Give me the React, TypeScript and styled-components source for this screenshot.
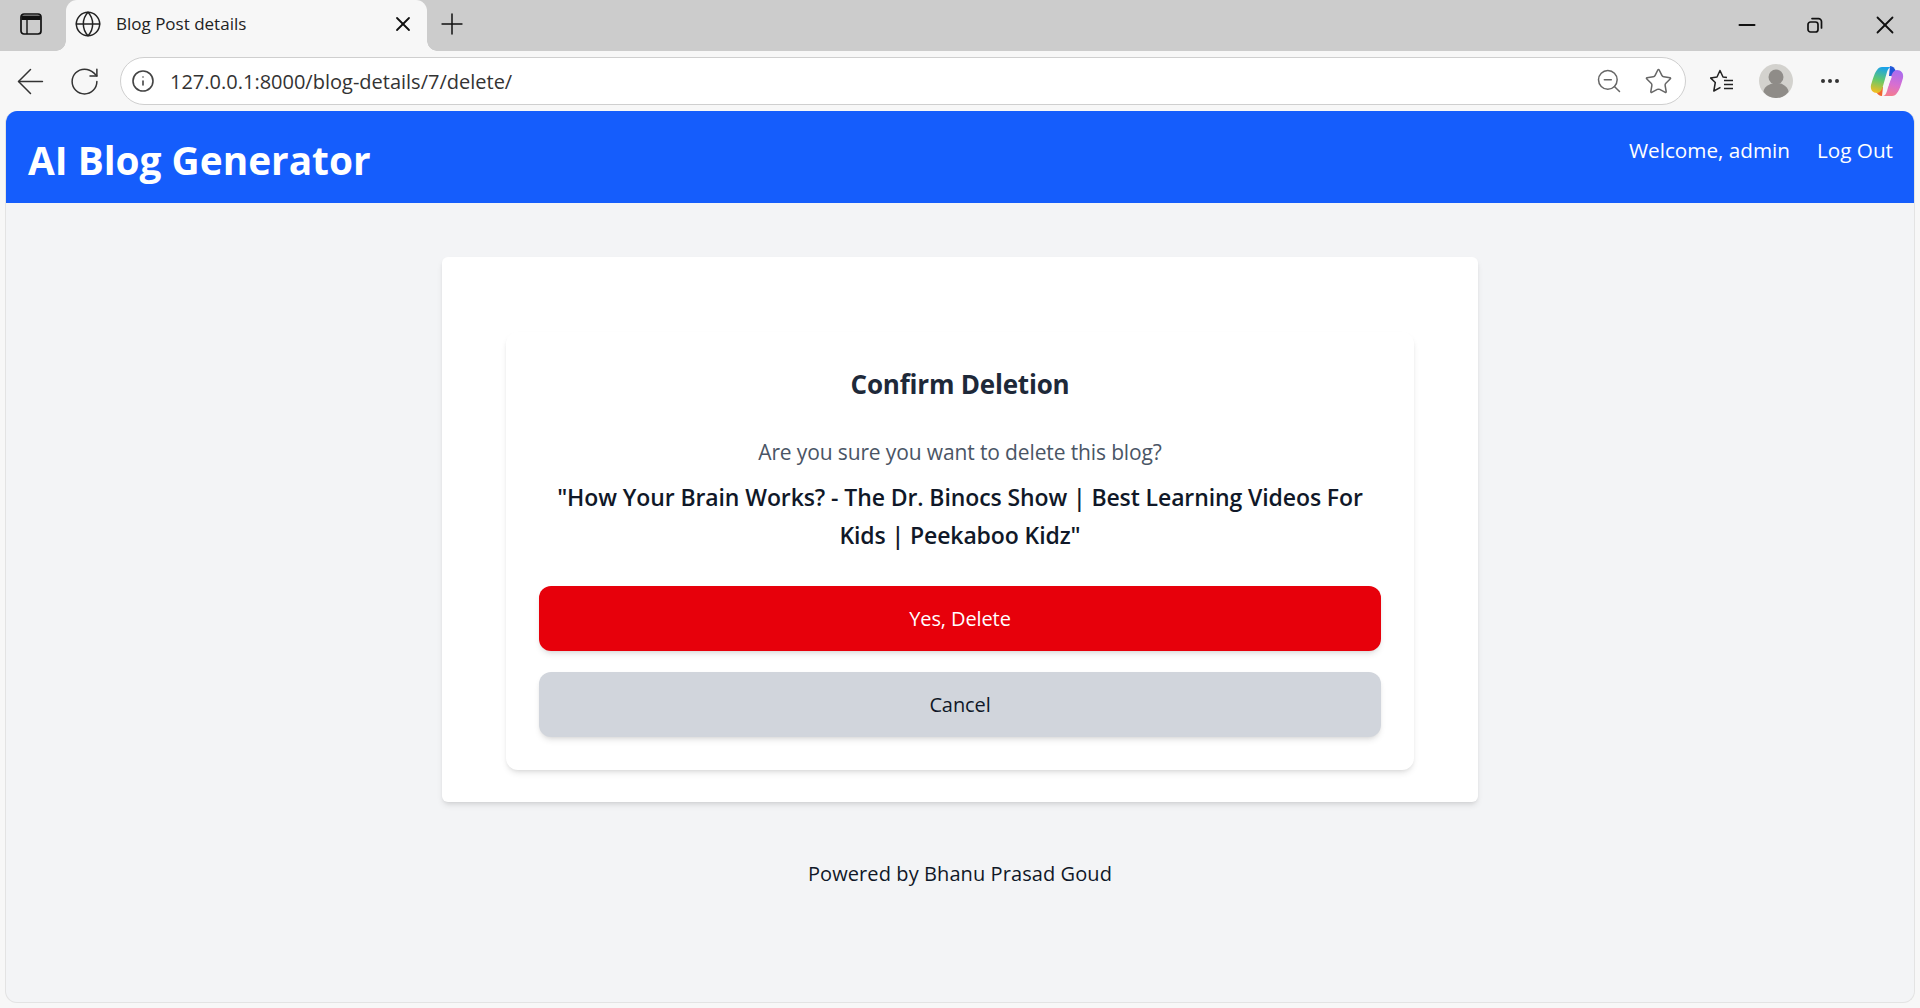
import styled, { createGlobalStyle } from "styled-components";
import { ArrowLeft, Globe, Info, Minus, Plus, RotateCw, Star, X, ZoomOut } from "lucide-react";

const GlobalStyle = createGlobalStyle`
  html, body {
    margin: 0;
    padding: 0;
    height: 100%;
    overflow: hidden;
    background: #f7f7f7;
    font-family: "Open Sans", "Noto Sans", sans-serif;
  }
  * { box-sizing: border-box; }
`;

const Shell = styled.div`
  display: flex;
  flex-direction: column;
  height: 1008px;
`;

const TabStrip = styled.div`
  align-items: flex-end;
  background: #cccccc;
  display: flex;
  flex-shrink: 0;
  height: 51px;
`;

const SideToggle = styled.div`
  align-items: center;
  align-self: center;
  display: flex;
  justify-content: center;
  padding: 0 5px 3px 0;
  width: 66px;
`;

const Tab = styled.div`
  align-items: center;
  background: #f7f7f7;
  border-radius: 11px 11px 0 0;
  display: flex;
  height: 51px;
  padding: 0 12px 4px 8px;
  position: relative;
  width: 361px;

  &::before,
  &::after {
    bottom: 0;
    content: "";
    height: 10px;
    position: absolute;
    width: 10px;
  }
  &::before {
    background: radial-gradient(circle at 0 0, transparent 9.5px, #f7f7f7 10px);
    left: -10px;
  }
  &::after {
    background: radial-gradient(circle at 100% 0, transparent 9.5px, #f7f7f7 10px);
    right: -10px;
  }
`;

const TabTitle = styled.span`
  color: #222;
  flex: 1;
  font-size: 17px;
  margin-left: 14px;
`;

const NewTab = styled.div`
  align-items: center;
  align-self: center;
  display: flex;
  margin-left: 8px;
  padding-bottom: 4px;
`;

const WindowControls = styled.div`
  align-items: center;
  align-self: center;
  display: flex;
  gap: 47px;
  margin-left: auto;
  padding: 0 20px 1px 0;
`;

const Toolbar = styled.div`
  align-items: center;
  background: #f7f7f7;
  display: flex;
  flex-shrink: 0;
  height: 60px;
  padding-left: 10px;
`;

const NavButton = styled.div<{ $gap: number }>`
  align-items: center;
  color: #333;
  display: flex;
  margin-right: ${(p) => p.$gap}px;
`;

const AddressBar = styled.div`
  align-items: center;
  background: #fff;
  border: 1px solid #cfcfcf;
  border-radius: 24px;
  display: flex;
  flex-shrink: 0;
  height: 48px;
  padding: 0 12px 0 10px;
  width: 1566px;
`;

const Url = styled.span`
  color: #333;
  flex: 1;
  font-size: 20px;
  margin-left: 15px;
`;

const BarIcons = styled.div`
  align-items: center;
  color: #666;
  display: flex;
  gap: 21px;
`;

const ToolSlot = styled.div<{ $gap: number }>`
  align-items: center;
  display: flex;
  flex-shrink: 0;
  margin-left: ${(p) => p.$gap}px;
`;

const Page = styled.div`
  background: #f3f4f6;
  border-bottom: 1px solid #e3e3e3;
  border-left: 1px solid #e3e3e3;
  border-radius: 12px;
  border-right: 1px solid #e3e3e3;
  display: flex;
  flex: 1;
  flex-direction: column;
  margin: 0 5px 5px;
  overflow: hidden;
`;

const Header = styled.header`
  align-items: flex-start;
  background: #155dfc;
  color: #fff;
  display: flex;
  flex-shrink: 0;
  height: 92px;
  justify-content: space-between;
  padding: 0 21px 0 22px;
`;

const Brand = styled.h1`
  font-size: 38.8px;
  font-weight: 700;
  line-height: 40px;
  margin: 29px 0 0;
`;

const HeaderLinks = styled.nav`
  display: flex;
  font-size: 20.7px;
  gap: 27px;
  line-height: 28px;
  margin-top: 25px;
`;

const Outer = styled.main`
  background: #fff;
  border-radius: 6px;
  box-shadow: 0 4px 6px -1px rgba(0, 0, 0, 0.1), 0 2px 4px -2px rgba(0, 0, 0, 0.1);
  margin: 54px auto 0;
  padding: 75px 64px 32px;
  width: 1036px;
`;

const Inner = styled.section`
  border-radius: 12px;
  box-shadow: 0 4px 6px -1px rgba(0, 0, 0, 0.1), 0 2px 4px -2px rgba(0, 0, 0, 0.1);
  padding: 36px 33px 33px;
  text-align: center;
`;

const Heading = styled.h2`
  color: #1e2939;
  font-size: 26px;
  font-weight: 700;
  letter-spacing: -0.2px;
  line-height: 32px;
  margin: 0 0 38px;
`;

const Question = styled.p`
  color: #4a5565;
  font-size: 21px;
  letter-spacing: -0.13px;
  line-height: 28px;
  margin: 0 0 12px;
`;

const BlogTitle = styled.p`
  color: #101828;
  font-size: 23px;
  font-weight: 600;
  letter-spacing: -0.1px;
  line-height: 38px;
  margin: 0 0 32px;
`;

const ActionButton = styled.button<{ $danger?: boolean }>`
  background: ${(p) => (p.$danger ? "#e7000b" : "#d1d5dc")};
  border: 0;
  border-radius: 12px;
  box-shadow: 0 4px 6px -1px rgba(0, 0, 0, 0.1), 0 2px 4px -2px rgba(0, 0, 0, 0.1);
  color: ${(p) => (p.$danger ? "#fff" : "#101828")};
  display: block;
  font-family: inherit;
  font-size: 20px;
  height: 65px;
  letter-spacing: -0.1px;
  margin-top: ${(p) => (p.$danger ? "0" : "21px")};
  width: 100%;
`;

const Footer = styled.footer`
  color: #101828;
  font-size: 20px;
  letter-spacing: 0.09px;
  line-height: 28px;
  margin-top: 58px;
  text-align: center;
`;

const SidebarIcon = () => (
  <svg width="22" height="22" viewBox="0 0 22 22" fill="none" stroke="#111" strokeWidth="1.7">
    <rect x="1" y="1" width="20" height="20" rx="3" />
    <path d="M1.5 2.5h19v4.5h-19z" fill="#111" stroke="none" />
    <path d="M7 7v14" strokeWidth="1.4" />
  </svg>
);

const RestoreIcon = () => (
  <svg width="16" height="16" viewBox="0 0 16 16" fill="none" stroke="#111" strokeWidth="1.7">
    <rect x="1" y="5" width="10" height="10" rx="2.5" />
    <path d="M5 1.6h6.5a3 3 0 0 1 3 3V11" strokeLinecap="round" />
  </svg>
);

const FavoritesIcon = () => (
  <svg width="24" height="24" viewBox="0 0 24 24" fill="none" stroke="#222" strokeWidth="1.5" strokeLinejoin="round">
    <path d="M17 8.500l-4-.5-3-6.500-3 6.500-6.500.9 4.800 4.600-1.500 8.500 6.700-3.600" />
    <path d="M14 11.500h9M14 15.500h9M14 19.500h9" />
  </svg>
);

const MoreIcon = () => (
  <svg width="20" height="6" viewBox="0 0 20 6" fill="#333">
    <circle cx="3" cy="3" r="2" />
    <circle cx="10" cy="3" r="2" />
    <circle cx="17" cy="3" r="2" />
  </svg>
);

const AvatarIcon = () => (
  <svg width="34" height="34" viewBox="0 0 34 34">
    <circle cx="17" cy="17" r="17" fill="#d3d2ce" />
    <circle cx="17" cy="13" r="7.500" fill="#8f8c88" />
    <path d="M4.500 28a12.500 9 0 0 1 25 0a16 16 0 0 1-25 0z" fill="#8f8c88" />
  </svg>
);

const CopilotIcon = () => (
  <svg width="34" height="31" viewBox="0 0 34 31">
    <defs>
      <linearGradient id="copilotLeft" x1="0.5" y1="0" x2="0.3" y2="1">
        <stop offset="0" stopColor="#1aa2ea" />
        <stop offset="0.5" stopColor="#63c96c" />
        <stop offset="1" stopColor="#f6bd1f" />
      </linearGradient>
      <linearGradient id="copilotRight" x1="0.6" y1="0" x2="0.4" y2="1">
        <stop offset="0" stopColor="#a86cf0" />
        <stop offset="0.55" stopColor="#d86fd0" />
        <stop offset="1" stopColor="#f47c8e" />
      </linearGradient>
    </defs>
    <path d="M20 0c3 0 5 2 6 6l1 4h-8z" fill="#1f55d8" />
    <path d="M12 30c-2.500 0-5-1.500-6-5l-1-4h8z" fill="#f0662e" />
    <path d="M12 1H22C19 1 18 3 17 6L13 20C12 24 10 27 7 27C3 27 0 24 1 19C3 12 5 6 7 4C8 2 10 1 12 1Z" fill="url(#copilotLeft)" />
    <path d="M22 30H12C15 30 16 28 17 25L21 11C22 7 24 4 27 4C31 4 34 7 33 12C31 19 29 25 27 27C26 29 24 30 22 30Z" fill="url(#copilotRight)" />
    <path d="M17.500 10.500H22L18 20.500H14Z" fill="#f7f7f7" />
  </svg>
);

const App = () => {
  return (
    <>
      <GlobalStyle />
      <Shell>
        <TabStrip>
          <SideToggle>
            <SidebarIcon />
          </SideToggle>
          <Tab>
            <Globe size={28} strokeWidth={1.5} absoluteStrokeWidth color="#222" />
            <TabTitle>Blog Post details</TabTitle>
            <X size={24} strokeWidth={1.8} absoluteStrokeWidth color="#111" />
          </Tab>
          <NewTab>
            <Plus size={34} strokeWidth={1.5} absoluteStrokeWidth color="#111" />
          </NewTab>
          <WindowControls>
            <Minus size={26} strokeWidth={1.8} absoluteStrokeWidth color="#111" />
            <RestoreIcon />
            <X size={30} strokeWidth={1.8} absoluteStrokeWidth color="#111" />
          </WindowControls>
        </TabStrip>
        <Toolbar>
          <NavButton $gap={17}>
            <ArrowLeft size={41} strokeWidth={1.5} absoluteStrokeWidth />
          </NavButton>
          <NavButton $gap={19}>
            <RotateCw size={33} strokeWidth={1.5} absoluteStrokeWidth />
          </NavButton>
          <AddressBar>
            <Info size={24} strokeWidth={1.6} absoluteStrokeWidth color="#444" />
            <Url>127.0.0.1:8000/blog-details/7/delete/</Url>
            <BarIcons>
              <ZoomOut size={28} strokeWidth={1.5} absoluteStrokeWidth />
              <Star size={29} strokeWidth={1.5} absoluteStrokeWidth />
            </BarIcons>
          </AddressBar>
          <ToolSlot $gap={24}>
            <FavoritesIcon />
          </ToolSlot>
          <ToolSlot $gap={25}>
            <AvatarIcon />
          </ToolSlot>
          <ToolSlot $gap={27}>
            <MoreIcon />
          </ToolSlot>
          <ToolSlot $gap={30}>
            <CopilotIcon />
          </ToolSlot>
        </Toolbar>
        <Page>
          <Header>
            <Brand>AI Blog Generator</Brand>
            <HeaderLinks>
              <span>Welcome, admin</span>
              <span>Log Out</span>
            </HeaderLinks>
          </Header>
          <Outer>
            <Inner>
              <Heading>Confirm Deletion</Heading>
              <Question>Are you sure you want to delete this blog?</Question>
              <BlogTitle>
                "How Your Brain Works? - The Dr. Binocs Show | Best Learning Videos For Kids | Peekaboo Kidz"
              </BlogTitle>
              <ActionButton $danger>Yes, Delete</ActionButton>
              <ActionButton>Cancel</ActionButton>
            </Inner>
          </Outer>
          <Footer>Powered by Bhanu Prasad Goud</Footer>
        </Page>
      </Shell>
    </>
  );
};

export default App;
